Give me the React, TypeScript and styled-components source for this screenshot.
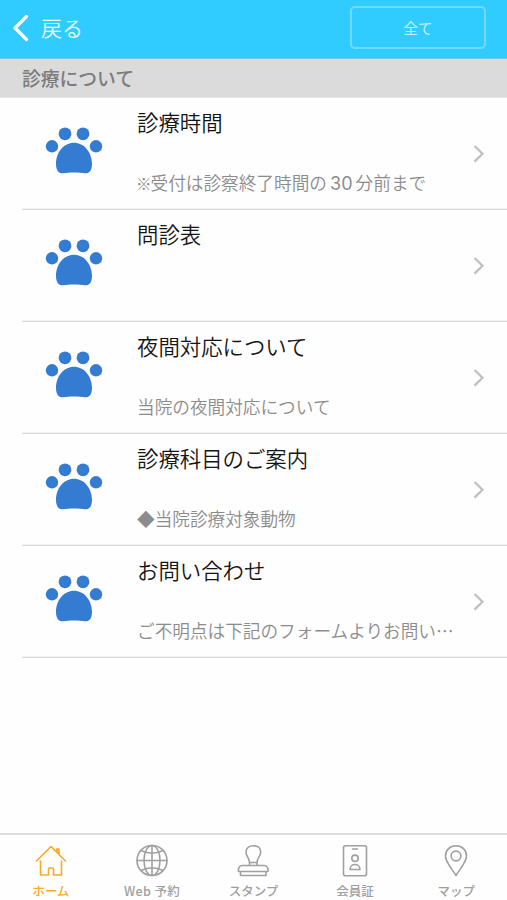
import React from "react";
import styled, { createGlobalStyle } from "styled-components";

const GlobalStyle = createGlobalStyle`
  * { box-sizing: border-box; }
  body { margin: 0; background: #fff; font-family: "Noto Sans CJK JP", sans-serif; }
  button { font-family: inherit; padding: 0; cursor: pointer; }
`;

const Screen = styled.div`
  width: 100%;
  height: 100vh;
  display: flex;
  flex-direction: column;
  overflow: hidden;
  background: #fefefe;
`;

const Header = styled.header`
  height: 59px;
  flex: none;
  display: flex;
  align-items: flex-start;
  justify-content: space-between;
  padding: 6px 21px 0 12px;
  background: #31ccff;
  border-bottom: 1px solid #7cc4df;
`;

const BackButton = styled.button`
  display: flex;
  align-items: center;
  gap: 12px;
  height: 43px;
  border: 0;
  background: none;
  color: #e9faff;
  font-size: 21px;
  font-weight: 350;
  line-height: 43px;
`;

const FilterButton = styled.button`
  width: 136px;
  height: 43px;
  border: 2px solid #6fdcff;
  border-radius: 5px;
  background: none;
  color: #c4f1ff;
  font-size: 14.5px;
  line-height: 39px;
`;

const SectionTitle = styled.h2`
  flex: none;
  height: 39px;
  margin: 0;
  padding-left: 22px;
  background: #dbdbdb;
  border-bottom: 1px solid #e6e6e6;
  color: #7c7c7c;
  font-size: 18.8px;
  font-weight: 500;
  line-height: 37px;
`;

const List = styled.ul`
  flex: 1;
  margin: 0;
  padding: 0 0 0 22px;
  list-style: none;
`;

const Row = styled.li`
  height: 112px;
  display: flex;
  border-bottom: 1px solid #dcdcdc;
  box-shadow: 0 -1px 0 #f0f0f0 inset;
`;

const PawCell = styled.div`
  flex: none;
  width: 115px;
  padding: 26px 0 0 22px;
`;

const RowText = styled.div`
  flex: 1;
  min-width: 0;
`;

const RowTitle = styled.div`
  height: 52px;
  color: #151515;
  font-size: 21.4px;
  font-weight: 350;
  line-height: 48px;
`;

const RowNote = styled.div`
  color: #8c8c8c;
  font-size: 17.65px;
  font-weight: 350;
  line-height: 66px;
  white-space: nowrap;
`;

const ReferenceMark = styled.span`
  margin: 0 -1px 0 -1px;
  font-size: 15.5px;
`;

const Digits = styled.span`
  margin: 0 3px 0 3px;
  font-family: "Inter", sans-serif;
  font-size: 18px;
  font-weight: 400;
  letter-spacing: 0.1px;
`;

const ArrowCell = styled.div`
  flex: none;
  width: 35px;
  padding: 46px 0 0 0;
`;

const TabBar = styled.nav`
  flex: none;
  height: 67px;
  display: grid;
  grid-template-columns: repeat(5, 1fr);
  border-top: 2px solid #dcdcdc;
  background: #fefefe;
`;

const Tab = styled.button<{ $active?: boolean }>`
  display: flex;
  flex-direction: column;
  align-items: center;
  padding-top: 9px;
  border: 0;
  background: none;
  color: ${(p) => (p.$active ? "#f8aa27" : "#a0a0a0")};
`;

const TabLabel = styled.span<{ $latin?: boolean }>`
  margin-top: 4px;
  font-size: 12.5px;
  font-weight: 500;
  line-height: 18px;
  letter-spacing: ${(p) => (p.$latin ? "0.4px" : "0")};
  white-space: nowrap;
`;

const Paw = () => (
  <svg width="60" height="52" viewBox="0 0 60 52" fill="#347bd2">
    <circle cx="8" cy="22.3" r="6.2" />
    <circle cx="21" cy="9.8" r="6.4" />
    <circle cx="39" cy="9.8" r="6.4" />
    <circle cx="52" cy="22.3" r="6.2" />
    <path d="M30 18.7C20 18.7 12 28 12 40C12 46 14.5 49.3 18.5 49.3C23 49.3 25 48.6 30 48.6C35 48.6 37 49.3 41.5 49.3C45.5 49.3 48 46 48 40C48 28 40 18.7 30 18.7Z" />
  </svg>
);

const LineIcon = styled.svg.attrs({ width: 34, height: 34, viewBox: "0 0 34 34" })`
  flex: none;
  fill: none;
  stroke: currentColor;
  stroke-width: 1.6;
  stroke-linejoin: round;
  stroke-linecap: round;
`;

const HomeIcon = () => (
  <LineIcon>
    <path d="M2.5 17L17 2.5L31.5 17M22.500 8M24.500 10V5M24.500 10M6.500 17V31H14.500V25Q14.500 24 15.500 24H18.500Q19.500 24 19.500 25V31H27.500V17M22.700 8V5H25V10.300" />
  </LineIcon>
);

const GlobeIcon = () => (
  <LineIcon>
    <circle cx="17" cy="16.5" r="15" />
    <ellipse cx="17" cy="16.5" rx="8" ry="15" />
    <path d="M17 1.5V31.5M2 16.5H32M6 6.5Q17 12 28 6.5M6 26.5Q17 21 28 26.5" />
  </LineIcon>
);

const StampIcon = () => (
  <LineIcon>
    <path d="M13.5 21.5V18.5C13.5 14 10 12 10 8.5C10 4 13 1.8 17.3 1.8C21.5 1.8 24.7 4 24.7 8.5C24.7 12 21 14 21 18.5V21.5M13.5 18.5H21M6.5 21.5H28C31 21.5 32.5 24 32 27.5H2.5C2 24 3.5 21.5 6.5 21.5ZM4.5 27.5V31.5H30V27.5" />
  </LineIcon>
);

const CardIcon = () => (
  <LineIcon>
    <rect x="5.5" y="1.8" width="23" height="30" rx="2" />
    <path d="M14.5 5H19.5M12 25.5C12 18.8 22 18.8 22 25.5Z" />
    <circle cx="17" cy="14.3" r="3.2" />
  </LineIcon>
);

const PinIcon = () => (
  <LineIcon>
    <path d="M17 31.5C14 26 6.5 18.5 6.5 12C6.5 6 11 1.8 17 1.8C23 1.8 27.5 6 27.5 12C27.5 18.5 20 26 17 31.5Z" />
    <circle cx="17" cy="12" r="4.9" />
  </LineIcon>
);

const rows: { title: string; note: React.ReactNode }[] = [
  {
    title: "診療時間",
    note: <><ReferenceMark>※</ReferenceMark>受付は診察終了時間の<Digits>30</Digits>分前まで</>,
  },
  { title: "問診表", note: "" },
  { title: "夜間対応について", note: "当院の夜間対応について" },
  { title: "診療科目のご案内", note: "◆当院診療対象動物" },
  { title: "お問い合わせ", note: "ご不明点は下記のフォームよりお問い…" },
];

const tabs = [
  { label: "ホーム", Icon: HomeIcon, active: true },
  { label: "Web 予約", Icon: GlobeIcon, latin: true },
  { label: "スタンプ", Icon: StampIcon },
  { label: "会員証", Icon: CardIcon },
  { label: "マップ", Icon: PinIcon },
];

export default function App() {
  return (
    <Screen>
      <GlobalStyle />
      <Header>
        <BackButton>
          <svg width="17" height="28" viewBox="0 0 17 28" fill="none" stroke="#fff" strokeWidth="3.2" strokeLinecap="round" strokeLinejoin="round">
            <path d="M14.5 2.5L3 14L14.5 25.5" />
          </svg>
          戻る
        </BackButton>
        <FilterButton>全て</FilterButton>
      </Header>
      <SectionTitle>診療について</SectionTitle>
      <List>
        {rows.map((row) => (
          <Row key={row.title}>
            <PawCell><Paw /></PawCell>
            <RowText>
              <RowTitle>{row.title}</RowTitle>
              <RowNote>{row.note}</RowNote>
            </RowText>
            <ArrowCell>
              <svg width="14" height="20" viewBox="0 0 14 20" fill="none" stroke="#c0c0c0" strokeWidth="2.3">
                <path d="M2.5 2L10.5 9.8L2.5 17.6" />
              </svg>
            </ArrowCell>
          </Row>
        ))}
      </List>
      <TabBar>
        {tabs.map(({ label, Icon, active, latin }) => (
          <Tab key={label} $active={active}>
            <Icon />
            <TabLabel $latin={latin}>{label}</TabLabel>
          </Tab>
        ))}
      </TabBar>
    </Screen>
  );
}
